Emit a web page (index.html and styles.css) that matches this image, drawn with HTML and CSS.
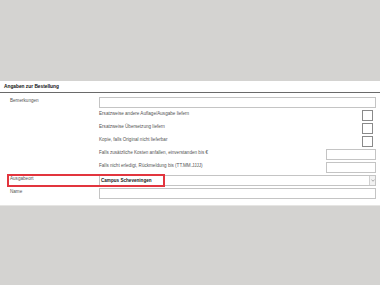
FILE: index.html
```html
<!DOCTYPE html>
<html lang="de">
<head>
<meta charset="utf-8">
<title>Angaben zur Bestellung</title>
<link rel="stylesheet" href="styles.css">
</head>
<body>
<div class="page">
  <section class="panel">
    <h2 class="heading">Angaben zur Bestellung</h2>
    <div class="form">
      <div class="row">
        <span class="label">Bemerkungen</span>
        <span class="input"></span>
      </div>
      <div class="row">
        <span class="label"></span>
        <div class="opt"><span class="text">Ersatzweise andere Auflage/Ausgabe liefern</span><span class="check"></span></div>
      </div>
      <div class="row">
        <span class="label"></span>
        <div class="opt"><span class="text">Ersatzweise Übersetzung liefern</span><span class="check"></span></div>
      </div>
      <div class="row">
        <span class="label"></span>
        <div class="opt"><span class="text">Kopie, falls Original nicht lieferbar</span><span class="check"></span></div>
      </div>
      <div class="row">
        <span class="label"></span>
        <div class="opt"><span class="text">Falls zusätzliche Kosten anfallen, einverstanden bis €</span><span class="small-input"></span></div>
      </div>
      <div class="row">
        <span class="label"></span>
        <div class="opt"><span class="text">Falls nicht erledigt, Rückmeldung bis (TT.MM.JJJJ)</span><span class="small-input"></span></div>
      </div>
      <div class="row highlight">
        <span class="label">Ausgabeort</span>
        <div class="select"><span class="value">Campus Scheveningen</span><span class="arrow"><svg width="4" height="3" viewBox="0 0 4 3"><path d="M0.5 0.8 L2 2.2 L3.5 0.8" fill="none" stroke="#777" stroke-width="0.6"/></svg></span></div>
      </div>
      <div class="row">
        <span class="label">Name</span>
        <span class="input"></span>
      </div>
    </div>
  </section>
</div>
</body>
</html>
```
FILE: styles.css
```css
html, body {
  margin: 0;
  padding: 0;
  background: #d4d3d1;
  font-family: "Liberation Sans", Arial, sans-serif;
}
.page {
  padding-top: 81px;
}
.panel {
  background: #fff;
  padding-bottom: 6px;
  border-bottom: 1px solid #e6e5e3;
}
.heading {
  margin: 0;
  font-size: 4.8px;
  font-weight: bold;
  color: #111;
  line-height: 10px;
  padding: 1px 0 0 4px;
  border-bottom: 1px solid #6a6a6a;
}
.form {
  padding: 4px 4px 0 10px;
}
.row {
  display: grid;
  grid-template-columns: 89px 1fr;
  height: 11px;
  margin-bottom: 2px;
  font-size: 4.6px;
  color: #555;
  line-height: 7px;
}
.row:last-child {
  margin-bottom: 0;
}
.input {
  box-sizing: border-box;
  border: 1px solid #c4c4c4;
  height: 11px;
  background: #fff;
}
.opt {
  display: flex;
  justify-content: space-between;
  align-items: flex-start;
}
.check {
  box-sizing: border-box;
  width: 11px;
  height: 11px;
  border: 1px solid #8a8a8a;
  margin-right: 3px;
  background: #fff;
}
.small-input {
  box-sizing: border-box;
  width: 50px;
  height: 11px;
  border: 1px solid #c4c4c4;
}
.highlight {
  position: relative;
}
.highlight::after {
  content: "";
  position: absolute;
  left: -3px;
  top: -1px;
  width: 158px;
  height: 13px;
  box-sizing: border-box;
  border: 2px solid #e2353e;
  pointer-events: none;
}
.select {
  box-sizing: border-box;
  border: 1px solid #c4c4c4;
  height: 11px;
  display: flex;
  justify-content: space-between;
  align-items: stretch;
}
.value {
  font-weight: bold;
  color: #222;
  line-height: 9px;
  padding-left: 1px;
}
.arrow {
  width: 5px;
  border-left: 1px solid #d0d0d0;
  background: #f2f2f2;
  display: flex;
  align-items: center;
  justify-content: center;
}
```
